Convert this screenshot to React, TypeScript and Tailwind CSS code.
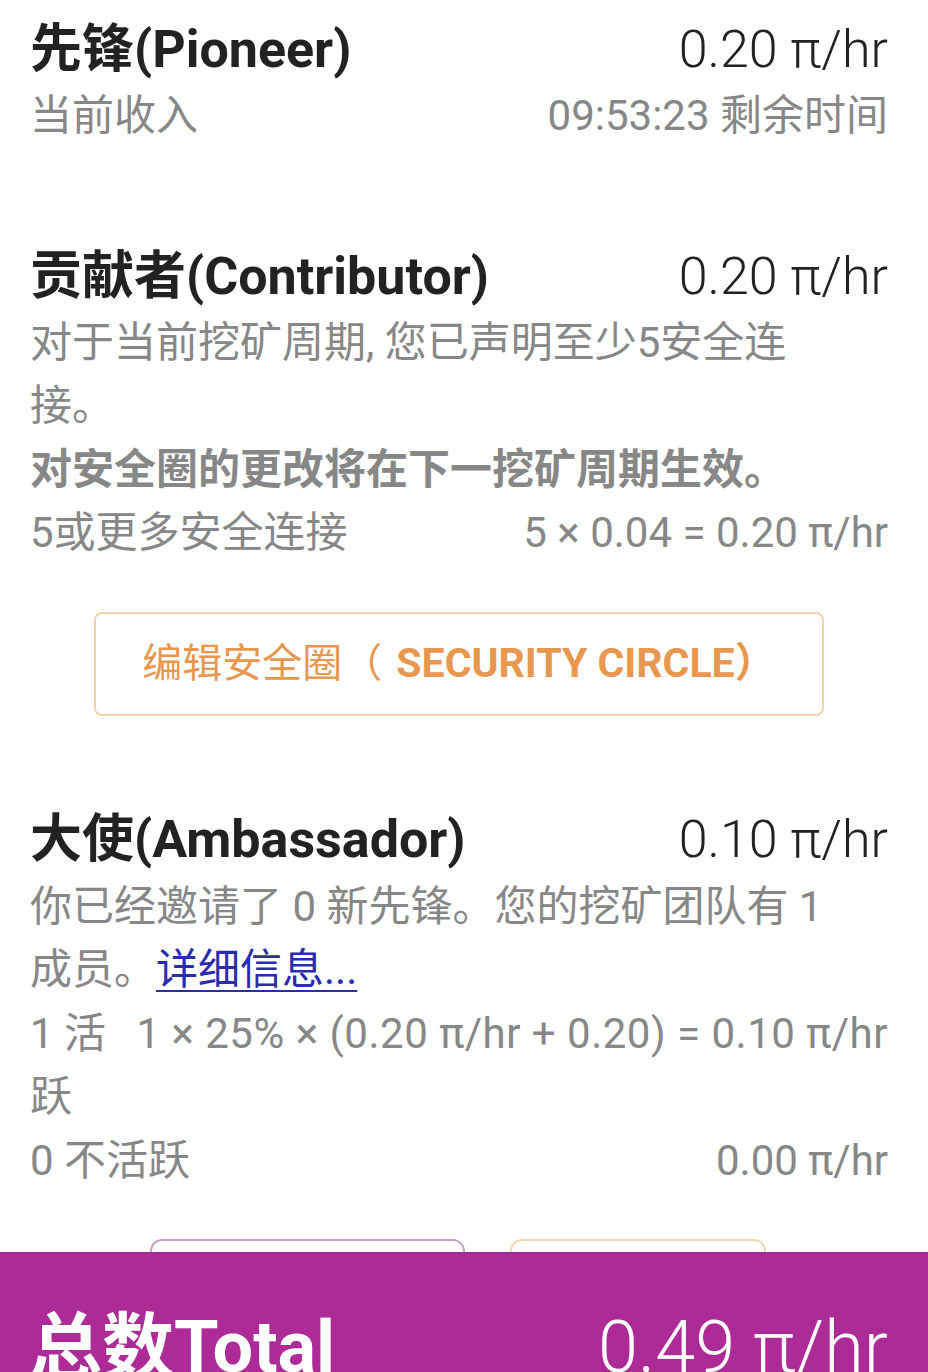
import React from "react";

const FONT = { fontFamily: 'Roboto, "Noto Sans CJK SC", "Noto Sans", sans-serif' };

function Row({ left, right, className = "" }: { left: React.ReactNode; right: React.ReactNode; className?: string }) {
  return (
    <div className={`flex items-start justify-between ${className}`}>
      <div>{left}</div>
      <div className="shrink-0 text-right">{right}</div>
    </div>
  );
}

function Heading({ title, value }: { title: string; value: string }) {
  return (
    <Row
      className="text-[52px] leading-[64px] text-[#222]"
      left={<span className="font-bold">{title}</span>}
      right={<span className="font-light">{value}</span>}
    />
  );
}

export default function App() {
  return (
    <div style={FONT} className="relative min-h-[1372px] bg-white">
      <div className="px-[30px] pt-[18px] pr-[40px] text-[42px] leading-[63.5px] text-[#878787]">
        {/* Pioneer */}
        <Heading title="先锋(Pioneer)" value="0.20 π/hr" />
        <Row className="mt-[2px]" left="当前收入" right="09:53:23 剩余时间" />

        {/* Contributor */}
        <div className="mt-[97px]">
          <Heading title="贡献者(Contributor)" value="0.20 π/hr" />
          <p className="mt-[2px]">
            对于当前挖矿周期, 您已声明至少5安全连<br />
            接。
          </p>
          <p className="font-bold">对安全圈的更改将在下一挖矿周期生效。</p>
          <Row left="5或更多安全连接" right="5 × 0.04 = 0.20 π/hr" />
        </div>

        <div className="mx-[64px] mt-[47px] flex h-[104px] items-center justify-center rounded-[8px] border-2 border-[#f3d2ae] text-[40px] text-[#e8974e]">
          <span>编辑安全圈（</span>
          <span className="ml-[14px] text-[41px] font-bold">SECURITY CIRCLE）</span>
        </div>

        {/* Ambassador */}
        <div className="mt-[92px]">
          <Heading title="大使(Ambassador)" value="0.10 π/hr" />
          <p className="mt-[3px]">
            你已经邀请了 0 新先锋。您的挖矿团队有 1<br />
            成员。<a href="#" className="text-[#2b2bb0] underline decoration-2 underline-offset-[6px]">详细信息...</a>
          </p>
          <Row
            left={<div className="w-[90px]">1 活跃</div>}
            right={<span className="tracking-[0.5px]">1 × 25% × (0.20 π/hr + 0.20) = 0.10 π/hr</span>}
          />
          <Row left="0 不活跃" right="0.00 π/hr" />
        </div>

        <div className="mt-[47px] flex gap-[45px] pl-[120px]">
          <div className="h-[100px] w-[315px] rounded-[12px] border-2 border-[#c9a6c4]" />
          <div className="h-[100px] w-[256px] rounded-[12px] border-2 border-[#eed8b8]" />
        </div>
      </div>

      {/* Total bar */}
      <div className="fixed inset-x-0 bottom-0 h-[120px] border-t-2 border-[#9a2f8a] bg-[#ad2b97] px-[30px] pt-[52px] pr-[40px]">
        <Row
          className="text-[72px] leading-[84px] text-white"
          left={<span className="font-bold">总数Total</span>}
          right={<span className="font-light">0.49 π/hr</span>}
        />
      </div>
    </div>
  );
}
